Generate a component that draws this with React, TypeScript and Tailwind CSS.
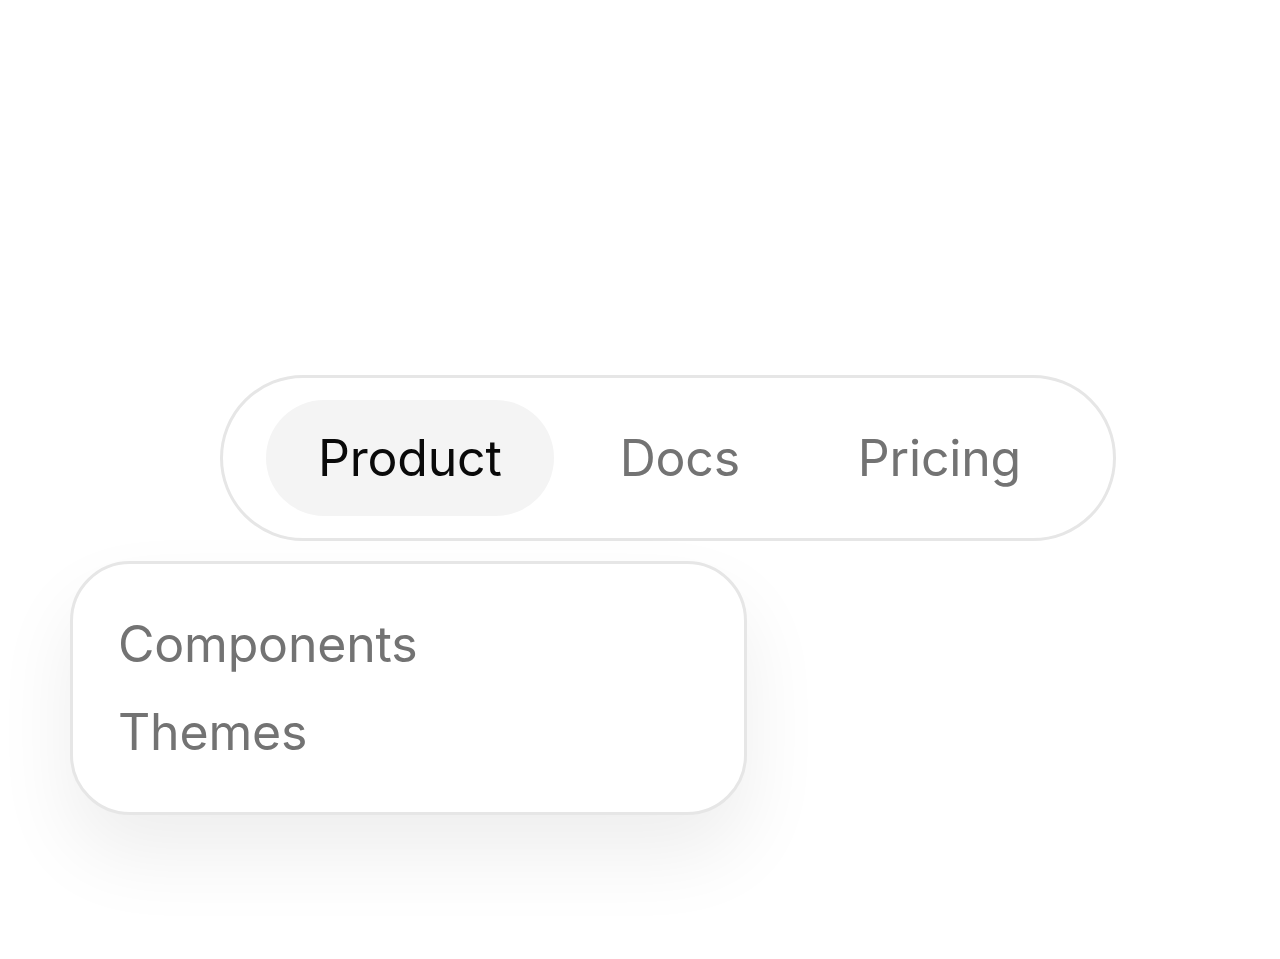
import { useState } from 'react';

const items = ['Product', 'Docs', 'Pricing'];

export default function App() {
  const [active, setActive] = useState('Product');

  return (
    <div className="min-h-[959px] w-full bg-white font-['Inter',sans-serif] antialiased">
      <div className="flex flex-col items-start pt-[375px]">
        {/* Top nav */}
        <nav className="ml-[220px] flex w-[896px] items-center gap-[14px] rounded-full border-[3px] border-[#e6e6e6] bg-white px-[43px] py-[22px]">
          {items.map((item) => (
            <button
              key={item}
              onClick={() => setActive(item)}
              className={`h-[116px] rounded-full px-[52px] text-[50px] leading-none tracking-[-0.2px] ${
                active === item ? 'bg-[#f4f4f4] text-[#0a0a0a]' : 'text-[#737373]'
              }`}
            >
              {item}
            </button>
          ))}
        </nav>

        {/* Dropdown */}
        <div className="ml-[70px] mt-[20px] w-[677px] rounded-[60px] border-[3px] border-[#e6e6e6] bg-white px-[45px] py-[36px] shadow-[0_40px_80px_rgba(0,0,0,0.07)]">
          <ul className="flex flex-col">
            <li className="text-[50px] leading-[88px] tracking-[-0.2px] text-[#737373]">Components</li>
            <li className="text-[50px] leading-[88px] tracking-[-0.2px] text-[#737373]">Themes</li>
          </ul>
        </div>
      </div>
    </div>
  );
}
